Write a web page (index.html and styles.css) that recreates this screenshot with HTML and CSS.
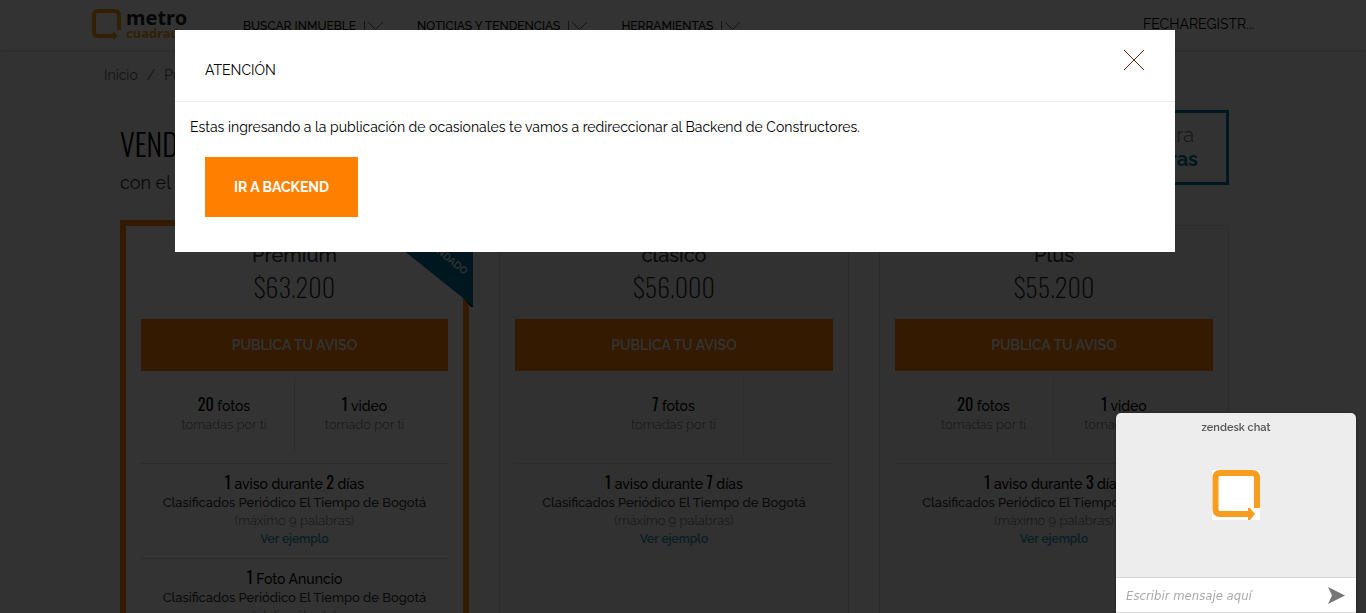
FILE: index.html
```html
<!DOCTYPE html>
<html lang="es">
<head>
<meta charset="utf-8">
<meta name="viewport" content="width=device-width, initial-scale=1">
<title>Metrocuadrado</title>
<link rel="stylesheet" href="styles.css">
</head>
<body>
<header class="topbar">
  <div class="topbar-inner">
    <a class="logo" href="#" aria-label="metro cuadrado">
      <svg class="logo-mark" width="30" height="31" viewBox="0 0 30 31" aria-hidden="true"><path d="M27 21V6q0-4-4-4H6Q2 2 2 6v17q0 4 4 4h16" fill="none" stroke="#f7a11a" stroke-width="4"/><path d="M21 22l5 5-5 4z" fill="#f7a11a"/></svg>
      <span class="logo-text"><span class="logo-metro">metro</span><span class="logo-cuadrado">cuadrado</span></span>
    </a>
    <nav class="nav">
      <a class="nav-item" href="#">BUSCAR INMUEBLE <svg class="chev" width="20" height="12" viewBox="0 0 20 12" aria-hidden="true"><path d="M.5 1v10M4 2l7.500 7.500L19 2"/></svg></a>
      <a class="nav-item" href="#">NOTICIAS Y TENDENCIAS <svg class="chev" width="20" height="12" viewBox="0 0 20 12" aria-hidden="true"><path d="M.5 1v10M4 2l7.500 7.500L19 2"/></svg></a>
      <a class="nav-item" href="#">HERRAMIENTAS <svg class="chev" width="20" height="12" viewBox="0 0 20 12" aria-hidden="true"><path d="M.5 1v10M4 2l7.500 7.500L19 2"/></svg></a>
    </nav>
    <a class="user" href="#">FECHAREGISTR...</a>
  </div>
</header>

<main class="page">
  <nav class="crumbs" aria-label="Ruta"><a href="#">Inicio</a><span>/</span><a href="#">Pu</a></nav>
  <section class="intro">
    <div>
      <h1 class="title">VENDE</h1>
      <p class="subtitle">con el</p>
    </div>
    <a class="banner" href="#"><span>para</span><strong>constructoras</strong></a>
  </section>

  <section class="plans">
    <article class="plan plan-featured">
      <svg class="ribbon" width="120" height="97" viewBox="0 0 120 97" aria-hidden="true"><path d="M112 90h8v7h-2z" fill="#002233"/><path d="M0 0h120v96z" fill="#007699"/><text class="ribbon-text" transform="translate(111 65) rotate(39)" text-anchor="end">RECOMENDADO</text></svg>
      <h2 class="plan-name">Premium</h2>
      <p class="price">$63.200</p>
      <button class="buy" type="button">PUBLICA TU AVISO</button>
      <div class="media">
        <p class="cell"><span class="big"><b>20</b> fotos</span><span class="soft">tomadas por ti</span></p>
        <p class="cell"><span class="big"><b>1</b> video</span><span class="soft">tomado por ti</span></p>
      </div>
      <div class="perk">
        <p class="big"><b>1</b> aviso durante <b>2</b> días</p>
        <p class="desc">Clasificados Periódico El Tiempo de Bogotá</p>
        <p class="soft">(máximo 9 palabras)</p>
        <a class="example" href="#">Ver ejemplo</a>
      </div>
      <div class="perk">
        <p class="big"><b>1</b> Foto Anuncio</p>
        <p class="desc">Clasificados Periódico El Tiempo de Bogotá</p>
        <p class="soft">(el día sábado)</p>
      </div>
    </article>

    <article class="plan">
      <h2 class="plan-name">clásico</h2>
      <p class="price">$56.000</p>
      <button class="buy" type="button">PUBLICA TU AVISO</button>
      <div class="media">
        <p class="cell"><span class="big"><b>7</b> fotos</span><span class="soft">tomadas por ti</span></p>
      </div>
      <div class="perk">
        <p class="big"><b>1</b> aviso durante <b>7</b> días</p>
        <p class="desc">Clasificados Periódico El Tiempo de Bogotá</p>
        <p class="soft">(máximo 9 palabras)</p>
        <a class="example" href="#">Ver ejemplo</a>
      </div>
    </article>

    <article class="plan">
      <h2 class="plan-name">Plus</h2>
      <p class="price">$55.200</p>
      <button class="buy" type="button">PUBLICA TU AVISO</button>
      <div class="media">
        <p class="cell"><span class="big"><b>20</b> fotos</span><span class="soft">tomadas por ti</span></p>
        <p class="cell"><span class="big"><b>1</b> video</span><span class="soft">tomado por ti</span></p>
      </div>
      <div class="perk">
        <p class="big"><b>1</b> aviso durante <b>3</b> días</p>
        <p class="desc">Clasificados Periódico El Tiempo de Bogotá</p>
        <p class="soft">(máximo 9 palabras)</p>
        <a class="example" href="#">Ver ejemplo</a>
      </div>
    </article>
  </section>
</main>

<div class="overlay">
  <div class="modal" role="dialog" aria-modal="true" aria-labelledby="modal-title">
    <div class="modal-head">
      <h2 class="modal-title" id="modal-title">ATENCIÓN</h2>
      <button class="close" type="button" aria-label="Cerrar"><svg width="22" height="22" viewBox="0 0 22 22" aria-hidden="true"><path d="M1 1l20 20M21 1L1 21" stroke="#6b2410" fill="none"/></svg></button>
    </div>
    <div class="modal-body">
      <p class="modal-msg">Estas ingresando a la publicación de ocasionales te vamos a redireccionar al Backend de Constructores.</p>
      <button class="go" type="button">IR A BACKEND</button>
    </div>
  </div>
</div>

<aside class="chat" aria-label="Chat">
  <p class="chat-brand">zendesk chat</p>
  <div class="chat-view">
    <svg width="48" height="50" viewBox="0 0 48 50" aria-hidden="true"><path d="M0 0h48v50H0z" fill="#fff"/><path d="M45 38V8q0-5-5-5H8Q3.500 3 3.500 8v31q0 5 4.500 5h29" fill="none" stroke="#f79d20" stroke-width="6"/><path d="M36 38h2l5 6-5 6h-2z" fill="#f79d20"/></svg>
  </div>
  <form class="chat-form">
    <input class="chat-input" type="text" aria-label="Mensaje" placeholder="Escribir mensaje aquí">
    <button class="send" type="button" aria-label="Enviar"><svg width="17" height="17" viewBox="0 0 17 17" aria-hidden="true"><path d="M0 0l17 8.500L0 17l4-8.500z" fill="#777"/></svg></button>
  </form>
</aside>
</body>
</html>
```

FILE: styles.css
```css
* { box-sizing: border-box; }
body {
  margin: 0;
  height: 100vh;
  overflow: hidden;
  background: #fafafa;
  color: #000;
  font-family: Raleway, Lato, sans-serif;
  font-size: 14px;
}
h1, h2, p { margin: 0; font-weight: 400; }
a { color: inherit; text-decoration: none; }
button { border: 0; padding: 0; font: inherit; cursor: pointer; }

.topbar { height: 50px; background: #fff; box-shadow: 0 1px 3px rgba(0, 0, 0, .2); position: relative; }
.topbar-inner { display: flex; align-items: flex-start; max-width: 1182px; margin: 0 auto; padding-right: 17px; }
.logo { display: flex; gap: 4px; padding-top: 9px; width: 151px; }
.logo-text { display: flex; flex-direction: column; font-family: "Noto Sans", "Open Sans", sans-serif; font-weight: 700; }
.logo-metro { font-size: 20px; line-height: 17px; color: #222; }
.logo-cuadrado { font-size: 13px; line-height: 14px; color: #f7a11a; }
.nav { display: flex; gap: 33px; flex: 1; padding-top: 18px; }
.nav-item { display: flex; align-items: center; gap: 8px; font-size: 12px; line-height: 16px; font-weight: 500; }
.chev { fill: none; stroke: #666; }
.user { padding-top: 16px; line-height: 16px; width: 114px; }

.page { max-width: 1126px; margin: 0 auto; padding-right: 17px; }
.crumbs { display: flex; gap: 9px; margin-left: -16px; padding-top: 15px; line-height: 20px; color: #666; }
.intro { display: flex; justify-content: space-between; padding-top: 25px; height: 135px; }
.title { font-family: Oswald, "Liberation Sans Narrow", sans-serif; font-size: 30px; line-height: 40px; padding-top: 14px; font-weight: 300; }
.subtitle { font-size: 18px; line-height: 24px; padding-top: 7px; color: #333; }
.banner { height: 75px; width: 250px; border: 3px solid #007699; display: flex; flex-direction: column; align-items: flex-end; padding: 10px 28px; font-size: 20px; line-height: 24px; color: #666; }
.banner span { padding-right: 4px; font-weight: 300; }
.banner strong { color: #007699; }

.plans { display: grid; grid-template-columns: 349fr 350fr 350fr; gap: 30px; }
.plan { position: relative; margin-top: 5px; min-height: 480px; padding: 15px; border: 1px solid #ddd; background: #f3f3f3; text-align: center; }
.plan-featured { margin-top: 0; border: 6px solid #ff8000; background: #fff; }
.ribbon { position: absolute; right: -10px; top: -16px; }
.ribbon-text { font-size: 10px; font-weight: 600; fill: #fff; }
.plan-name { font-size: 20px; line-height: 28px; font-weight: 500; color: #333; }
.price { font-family: Oswald, "Liberation Sans Narrow", sans-serif; font-size: 26px; font-weight: 200; line-height: 36px; color: #222; padding-bottom: 14px; }
.buy { display: block; width: 100%; height: 52px; background: #ff8000; color: #fff; font-weight: 600; }
.media { display: flex; justify-content: center; height: 93px; padding: 7px 0 10px; border-bottom: 1px solid #ddd; }
.cell { width: 140px; padding-top: 18px; display: flex; flex-direction: column; }
.cell:first-child { border-right: 1px solid #ddd; }
.big { font-size: 14px; line-height: 20px; font-weight: 500; color: #000; }
.big b { font-family: Oswald, "Liberation Sans Narrow", sans-serif; font-size: 16px; line-height: 1; font-weight: 400; }
.soft { font-size: 13px; line-height: 18px; font-weight: 300; color: #666; }
.desc { font-size: 13px; line-height: 18px; font-weight: 500; color: #333; }
.perk { padding: 10px 0; border-bottom: 1px solid #ddd; }
.perk:last-child { border-bottom: 0; }
.example { display: block; font-size: 12px; line-height: 18px; font-weight: 600; color: #2f93b8; }

.overlay { position: fixed; inset: 0; background: rgba(0, 0, 0, .8); padding: 30px 191px 0 175px; }
.modal { background: #fff; padding-bottom: 35px; }
.modal-head { display: flex; justify-content: space-between; height: 72px; padding: 19px 30px 0; border-bottom: 1px solid #eee; }
.modal-title { font-size: 14px; line-height: 20px; padding-top: 11px; }
.close { background: none; width: 22px; height: 22px; }
.modal-body { padding: 15px 15px 0; }
.modal-msg { line-height: 20px; }
.go { margin: 20px 0 0 15px; width: 153px; height: 60px; background: #ff8000; color: #fff; font-weight: 700; display: block; }

.chat { position: fixed; right: 10px; bottom: 0; width: 240px; border-radius: 5px 5px 0 0; overflow: hidden; background: #ededed; box-shadow: 0 0 3px rgba(0, 0, 0, .4); }
.chat-brand { text-align: center; font-size: 11px; line-height: 29px; font-weight: 600; color: #555; }
.chat-view { height: 135px; display: flex; justify-content: center; padding-top: 28px; }
.chat-form { display: flex; align-items: center; height: 36px; background: #fff; border-top: 1px solid #d8d8d8; border-bottom: 1px solid #d8d8d8; padding: 0 11px 0 10px; }
.chat-input { flex: 1; min-width: 0; border: 0; padding: 0; font: italic 13px "DejaVu Sans Condensed", "DejaVu Sans", sans-serif; }
.chat-input::placeholder { color: #aaa; }
.send { background: none; height: 17px; }
```
